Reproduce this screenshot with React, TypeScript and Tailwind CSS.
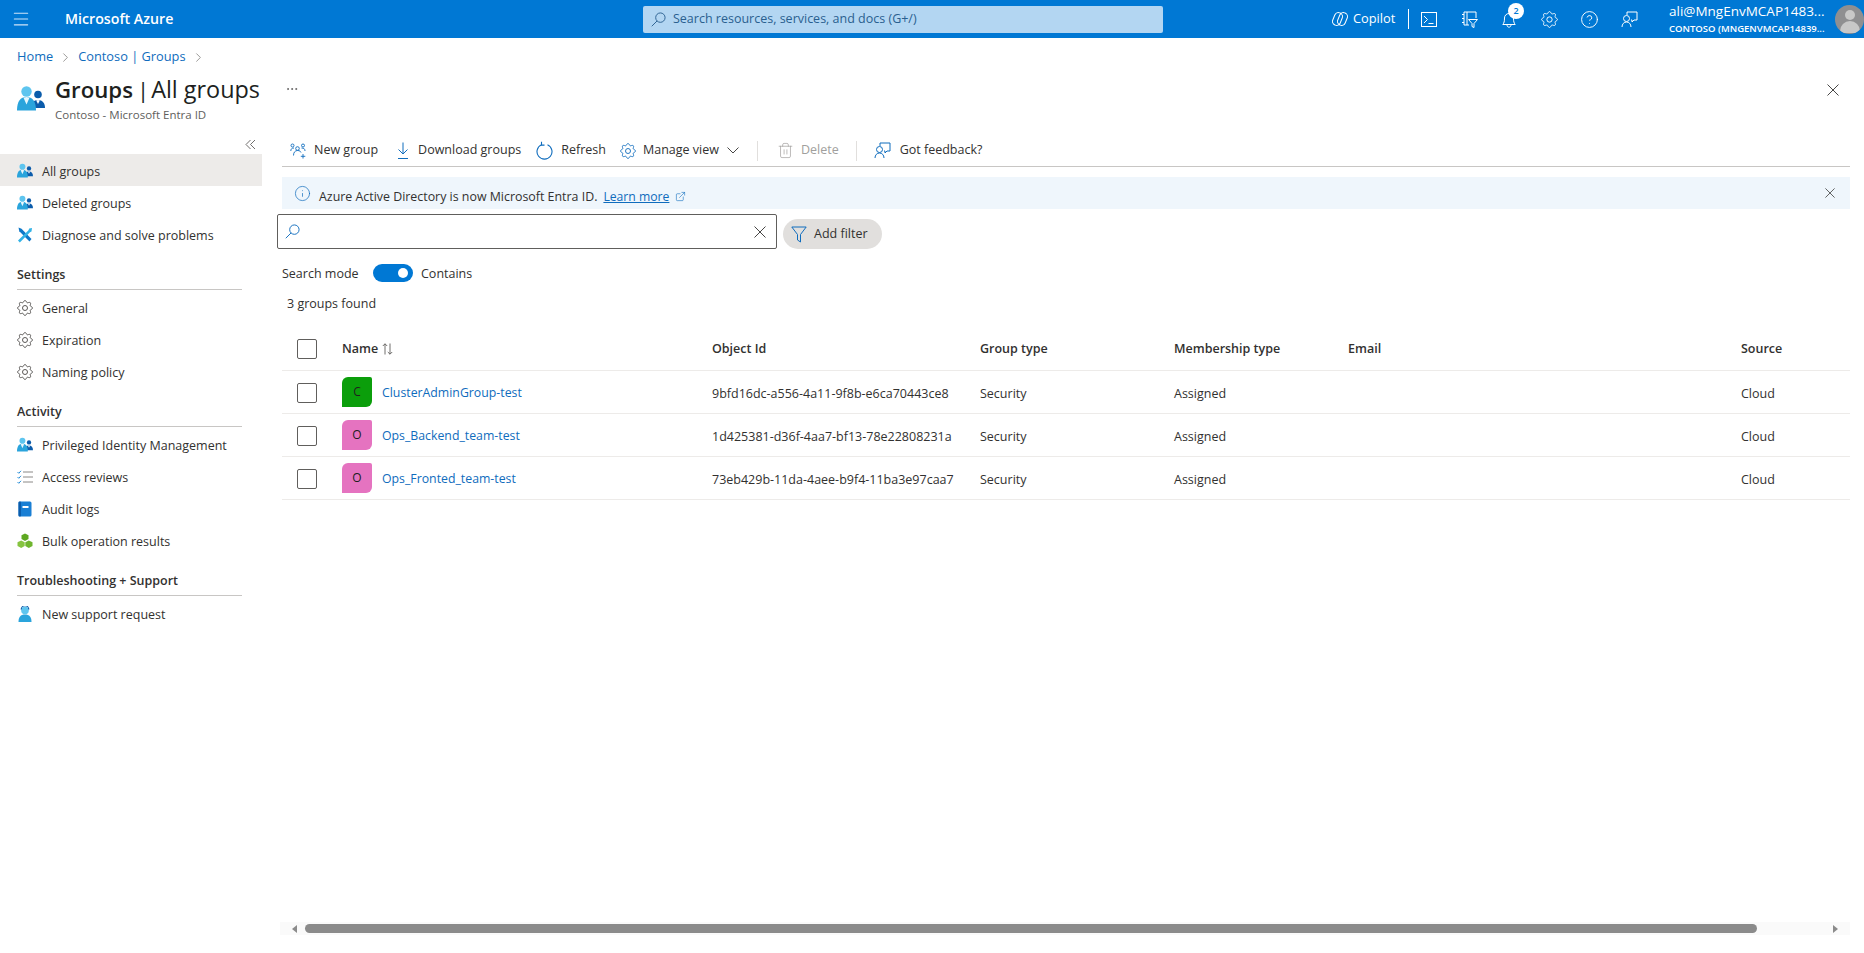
import { ChevronRight, CircleHelp, Ellipsis, ExternalLink, Info, Menu, Trash2 } from "lucide-react"

// scalloped outline of the portal's gear icon
const gearPoints = Array.from({ length: 96 }, (_, i) => {
  const angle = (i / 96) * Math.PI * 2
  const radius = 6.6 + 0.9 * Math.cos(angle * 8)
  return `${(8 + radius * Math.cos(angle)).toFixed(2)},${(8 + radius * Math.sin(angle)).toFixed(2)}`
}).join(" ")

function GearIcon({ color = "#484644", size = 16 }: { color?: string; size?: number }) {
  return (
    <svg width={size} height={size} viewBox="0 0 16 16" fill="none" stroke={color} strokeWidth="0.900" className="shrink-0">
      <polygon points={gearPoints} />
      <circle cx="8" cy="8" r="2.500" />
    </svg>
  )
}

function Cross({ size, color = "#323130" }: { size: number; color?: string }) {
  return (
    <svg width={size} height={size} viewBox="0 0 12 12" fill="none" stroke={color} strokeWidth="0.900" className="shrink-0">
      <path d="M.5.5l11 11M11.500.5l-11 11" />
    </svg>
  )
}

function SearchGlyph({ color, size = 15 }: { color: string; size?: number }) {
  return (
    <svg width={size} height={size} viewBox="0 0 16 16" fill="none" stroke={color} strokeWidth="1" className="shrink-0">
      <circle cx="10" cy="6" r="5" />
      <path d="M6.400 9.600L.8 15.200" />
    </svg>
  )
}

// Blue "people" glyph used for groups in the blade header and side menu
function PeopleIcon({ size = 16 }: { size?: number }) {
  return (
    <svg width={size} height={size} viewBox="0 0 28 28" className="shrink-0">
      <circle cx="21" cy="9.500" r="3.800" fill="#0b5cab" />
      <path d="M14 23c0-5 2.500-8 7-8s7 3 7 8z" fill="#0b5cab" />
      <path d="M21 15l-1.800.4 1.800 3.500 1.800-3.500z" fill="#ffffff" />
      <circle cx="9.500" cy="6.500" r="5.200" fill="#5ec5ef" />
      <path d="M0 25.500C0 16 3.500 12 9.500 12S19 16 19 25.500z" fill="#2aa4dc" />
      <path d="M9.500 12l-3 .7 3 6.800 3-6.800z" fill="#e8f7fd" />
    </svg>
  )
}

function ToolsIcon() {
  return (
    <svg width="16" height="16" viewBox="0 0 16 16" className="shrink-0">
      <path d="M1.500.5l3 1.200 10 10.300-2 2.500L2.300 4.200 1.500.5z" fill="#0f78c8" />
      <path d="M15 1l-2.800.5-.7 1.800L1 13.500l1.800 2L13 5.200l1.500-.7z" fill="#33b3e6" />
    </svg>
  )
}

function ChecklistIcon() {
  return (
    <svg width="16" height="16" viewBox="0 0 16 16" fill="none" className="shrink-0">
      <path d="M.5 3l1.300 1.300L4 1.800M.5 8l1.300 1.300L4 6.800M.5 13l1.300 1.300L4 11.800" stroke="#2a8fd8" />
      <path d="M6 3h10M6 8h10M6 13h10" stroke="#8a8886" />
    </svg>
  )
}

function BookIcon() {
  return (
    <svg width="16" height="16" viewBox="0 0 16 16" className="shrink-0">
      <rect x="1.500" y="0.500" width="13" height="15" rx="1.500" fill="#1a7fd4" />
      <rect x="1.500" y="0.500" width="2.500" height="15" rx="1" fill="#0b5cab" />
      <rect x="5.500" y="5" width="6" height="2" fill="#ffffff" />
    </svg>
  )
}

function CubesIcon() {
  return (
    <svg width="16" height="16" viewBox="0 0 16 16" className="shrink-0">
      <path d="M8 .5l3.500 1.800v3.800L8 8 4.500 6.100V2.300z" fill="#5ea821" />
      <path d="M4.200 7.400l3.500 1.800v3.800L4.200 15 .5 13V9.200z" fill="#86c440" />
      <path d="M11.800 7.400l3.700 1.800V13l-3.700 2-3.500-2V9.200z" fill="#6fb52e" />
    </svg>
  )
}

function SupportIcon() {
  return (
    <svg width="16" height="16" viewBox="0 0 16 16" className="shrink-0">
      <circle cx="8" cy="4.500" r="3.800" fill="#5ec5ef" />
      <path d="M4.200 3.500a3.800 3.800 0 0 1 7.600 0" fill="none" stroke="#0b5cab" strokeWidth="1.200" />
      <path d="M1.500 16c0-5 2-7.500 6.500-7.500S14.500 11 14.500 16z" fill="#2aa4dc" />
    </svg>
  )
}

function NewGroupIcon() {
  return (
    <svg width="16" height="16" viewBox="0 0 16 16" fill="none" stroke="#0f6cbd" strokeWidth="0.900" className="shrink-0">
      <circle cx="2.500" cy="2.500" r="1.500" />
      <circle cx="7.500" cy="5.500" r="1.800" />
      <circle cx="13" cy="2.500" r="1.500" />
      <path d="M.8 8c0-2 1-3 3.200-3M3.500 12.500c0-3 1.500-5 4-5s3 1 3.500 2M15 8c0-2-1-3-3.500-3" />
      <path d="M13 11v4.500M10.800 13.300h4.500" />
    </svg>
  )
}

function DownloadIcon() {
  return (
    <svg width="16" height="18" viewBox="0 0 16 18" fill="none" stroke="#0f6cbd" strokeWidth="1" className="shrink-0">
      <path d="M8 .5V12M3.500 7.500L8 12l4.500-4.500M3 16.500h10" />
    </svg>
  )
}

function RefreshIcon() {
  return (
    <svg width="17" height="19" viewBox="0 0 17 19" fill="none" stroke="#0f6cbd" strokeWidth="1.100" className="shrink-0">
      <path d="M11.500 3.800a7.500 7.500 0 1 1-6 0" />
      <path d="M5.500.8v3.300h3" />
    </svg>
  )
}

function FunnelIcon() {
  return (
    <svg width="16" height="17" viewBox="0 0 16 17" fill="none" stroke="#0f6cbd" strokeWidth="1" className="shrink-0">
      <path d="M.8 1h14.400L9.500 8.500v7.500l-3-2V8.500z" />
    </svg>
  )
}

function SortIcon() {
  return (
    <svg width="11" height="12" viewBox="0 0 11 12" fill="none" stroke="#605e5c" strokeWidth="0.900" className="shrink-0">
      <path d="M3 11.500V.8M.8 3L3 .8 5.200 3M8 .5v10.700M5.800 9L8 11.200 10.200 9" />
    </svg>
  )
}

function FeedbackIcon({ color }: { color: string }) {
  return (
    <svg width="17" height="17" viewBox="0 0 17 17" fill="none" stroke={color} strokeWidth="1" className="shrink-0">
      <path d="M6 4V1h10v8h-3l-2 2V9h-1" />
      <circle cx="5.500" cy="7.500" r="3" />
      <path d="M1 16c0-3 2-5 4.500-5S10 13 10 16" />
    </svg>
  )
}

function CopilotIcon() {
  return (
    <svg width="16" height="16" viewBox="0 0 16 16" fill="none" stroke="#ffffff" strokeWidth="1" className="shrink-0">
      <rect x="1.500" y="1.500" width="8" height="13" rx="3.800" transform="rotate(22 5.500 8)" />
      <rect x="6.500" y="1.500" width="8" height="13" rx="3.800" transform="rotate(22 10.500 8)" />
    </svg>
  )
}

function ShellIcon() {
  return (
    <svg width="16" height="15" viewBox="0 0 16 15" fill="none" stroke="#ffffff" strokeWidth="1" className="shrink-0">
      <rect x="0.500" y="0.500" width="15" height="14" />
      <path d="M3 4l3.500 3.500L3 11M7.500 11.500h5" />
    </svg>
  )
}

function DirectoryFilterIcon() {
  return (
    <svg width="17" height="17" viewBox="0 0 17 17" fill="none" stroke="#ffffff" strokeWidth="1" className="shrink-0">
      <path d="M6 1h9v6M3 1h3v13H3zM1 3.500h2M1 7.500h2M1 11.500h2M6 14h2" />
      <path d="M7.500 8.500h9l-3.500 4v4l-2-1v-3z" />
    </svg>
  )
}

function BellIcon() {
  return (
    <svg width="14" height="16" viewBox="0 0 14 16" fill="none" stroke="#ffffff" strokeWidth="1" className="shrink-0">
      <path d="M.8 12.500C2 11 2.500 9.500 2.500 6a4.500 4.500 0 0 1 9 0c0 3.500.5 5 1.700 6.500z" />
      <path d="M5 12.800c0 1.500.9 2.400 2 2.400s2-.9 2-2.400" />
    </svg>
  )
}

const mainMenu = [
  { label: "All groups", icon: <PeopleIcon />, active: true },
  { label: "Deleted groups", icon: <PeopleIcon /> },
  { label: "Diagnose and solve problems", icon: <ToolsIcon /> },
]

const menuSections = [
  {
    title: "Settings",
    items: [
      { label: "General", icon: <GearIcon /> },
      { label: "Expiration", icon: <GearIcon /> },
      { label: "Naming policy", icon: <GearIcon /> },
    ],
  },
  {
    title: "Activity",
    items: [
      { label: "Privileged Identity Management", icon: <PeopleIcon /> },
      { label: "Access reviews", icon: <ChecklistIcon /> },
      { label: "Audit logs", icon: <BookIcon /> },
      { label: "Bulk operation results", icon: <CubesIcon /> },
    ],
  },
  {
    title: "Troubleshooting + Support",
    items: [{ label: "New support request", icon: <SupportIcon /> }],
  },
]

const groups = [
  { name: "ClusterAdminGroup-test", letter: "C", color: "bg-[#0b9e0b]", id: "9bfd16dc-a556-4a11-9f8b-e6ca70443ce8" },
  { name: "Ops_Backend_team-test", letter: "O", color: "bg-[#e573c0]", id: "1d425381-d36f-4aa7-bf13-78e22808231a" },
  { name: "Ops_Fronted_team-test", letter: "O", color: "bg-[#e573c0]", id: "73eb429b-11da-4aee-b9f4-11ba3e97caa7" },
]

function MenuRow({ label, icon, active }: { label: string; icon: React.ReactNode; active?: boolean }) {
  return (
    <div className={`flex h-8 items-center gap-[9px] pl-[17px] pt-[2px] ${active ? "bg-[#edebe9]" : ""}`}>
      {icon}
      <span className="mt-[2px]">{label}</span>
    </div>
  )
}

function Checkbox() {
  return <div className="h-5 w-5 rounded-[2px] border border-[#605e5c] bg-white" />
}

export default function App() {
  return (
    <div className="flex h-screen flex-col overflow-hidden bg-white font-['Open_Sans',sans-serif] text-[12.5px] text-[#323130]">
      {/* top bar */}
      <header className="relative flex h-[38px] shrink-0 items-center bg-[#0078d4] text-white">
        <Menu size={20} strokeWidth={1.300} color="#cfe4f7" className="ml-[11px]" />
        <span className="ml-[34px] w-[112px] whitespace-nowrap text-[14.200px] font-semibold">Microsoft Azure</span>
        <div className="ml-[466px] flex h-[27px] w-[520px] items-center gap-[7px] rounded-[2px] bg-[#b3d6f2] pl-[8px] text-[#2a5f8f]">
          <SearchGlyph color="#2a5f8f" />
          <span>Search resources, services, and docs (G+/)</span>
        </div>
        <div className="ml-[169px] flex items-center">
          <CopilotIcon />
          <span className="ml-[5px] w-[55px] text-[12.800px] font-medium">Copilot</span>
          <div className="h-5 w-px bg-white" />
          <div className="flex h-[38px] w-10 items-center justify-center">
            <ShellIcon />
          </div>
          <div className="flex h-[38px] w-10 items-center justify-center">
            <DirectoryFilterIcon />
          </div>
          <div className="flex h-[38px] w-10 items-center justify-center">
            <div className="relative mt-[2px]">
              <BellIcon />
              <span className="absolute -top-[9px] left-[6px] flex h-4 w-4 items-center justify-center rounded-full bg-white text-[9px] font-semibold text-[#0078d4]">
                2
              </span>
            </div>
          </div>
          <div className="flex h-[38px] w-10 items-center justify-center">
            <GearIcon color="#ffffff" size={17} />
          </div>
          <div className="flex h-[38px] w-10 items-center justify-center">
            <CircleHelp size={19} strokeWidth={1.200} />
          </div>
          <div className="flex h-[38px] w-10 items-center justify-center">
            <FeedbackIcon color="#ffffff" />
          </div>
        </div>
        <div className="ml-[20px] flex w-[160px] flex-col leading-none">
          <span className="text-[13.500px]">ali@MngEnvMCAP1483...</span>
          <span className="mt-[5px] text-[9.500px] font-semibold">CONTOSO (MNGENVMCAP14839...</span>
        </div>
        <div className="ml-[6px] flex h-[29px] w-[29px] flex-col items-center overflow-hidden rounded-full bg-[#8f8f91]">
          <div className="mt-[5px] h-[10px] w-[10px] rounded-full bg-[#c8c8c8]" />
          <div className="mt-[1px] h-[12px] w-[20px] rounded-t-full bg-[#c8c8c8]" />
        </div>
      </header>

      {/* breadcrumb */}
      <nav className="flex h-[36px] shrink-0 items-center gap-[5px] pl-[17px] pt-[2px] text-[12.800px] text-[#0f6cbd]">
        <span>Home</span>
        <ChevronRight size={15} strokeWidth={1} color="#605e5c" />
        <span>Contoso | Groups</span>
        <ChevronRight size={15} strokeWidth={1} color="#605e5c" />
      </nav>

      {/* blade title */}
      <div className="flex h-[60px] shrink-0 items-start pl-[17px] pr-[25px]">
        <div className="mt-[11px]">
          <PeopleIcon size={28} />
        </div>
        <div className="ml-[10px] flex w-[230px] flex-col">
          <h1 className="-mt-[1px] whitespace-nowrap text-[22.200px] leading-[32px] text-[#201f1e]">
            <span className="font-semibold">Groups</span>
            <span className="ml-[4px] mr-[2px]">|</span>
            <span className="text-[23.400px]">All groups</span>
          </h1>
          <span className="text-[11.500px] leading-[17px] text-[#605e5c]">Contoso - Microsoft Entra ID</span>
        </div>
        <Ellipsis size={14} strokeWidth={1} className="mt-[8px]" />
        <div className="ml-auto mt-[10px]">
          <Cross size={12} />
        </div>
      </div>

      <div className="flex min-h-0 flex-1">
        {/* side menu */}
        <aside className="w-[262px] shrink-0">
          <div className="flex h-[20px] items-center justify-end pr-[6px]">
            <svg width="11" height="11" viewBox="0 0 11 11" fill="none" stroke="#605e5c" strokeWidth="0.900">
              <path d="M5.500 1L1 5.500 5.500 10M10 1L5.500 5.500 10 10" />
            </svg>
          </div>
          {mainMenu.map((item) => (
            <MenuRow key={item.label} {...item} />
          ))}
          {menuSections.map((section) => (
            <div key={section.title}>
              <div className="ml-[17px] mr-5 mt-[15px] flex h-[25px] items-center border-b border-[#c8c6c4] pb-[4px] font-semibold">
                {section.title}
              </div>
              <div className="mt-[1px]">
                {section.items.map((item) => (
                  <MenuRow key={item.label} {...item} />
                ))}
              </div>
            </div>
          ))}
        </aside>

        {/* content */}
        <main className="flex min-w-0 flex-1 flex-col pl-[15px] pr-[14px]">
          <div className="ml-[5px] flex h-[33px] shrink-0 items-center border-b border-[#c8c6c4] pl-[8px] pt-[1px]">
            <NewGroupIcon />
            <span className="ml-2">New group</span>
            <div className="ml-[17px]">
              <DownloadIcon />
            </div>
            <span className="ml-[7px]">Download groups</span>
            <div className="ml-[15px]">
              <RefreshIcon />
            </div>
            <span className="ml-2">Refresh</span>
            <div className="ml-[14px]">
              <GearIcon color="#0f6cbd" />
            </div>
            <span className="ml-[7px]">Manage view</span>
            <svg width="12" height="7" viewBox="0 0 12 7" fill="none" stroke="#323130" strokeWidth="0.900" className="ml-2">
              <path d="M.5.5L6 6l5.500-5.500" />
            </svg>
            <div className="ml-[18px] h-[20px] w-px bg-[#e1dfdd]" />
            <Trash2 size={17} strokeWidth={1} color="#a19f9d" className="ml-[19px]" />
            <span className="ml-[7px] text-[#a19f9d]">Delete</span>
            <div className="ml-[17px] h-[20px] w-px bg-[#e1dfdd]" />
            <div className="ml-[17px]">
              <FeedbackIcon color="#0f6cbd" />
            </div>
            <span className="ml-[9px]">Got feedback?</span>
          </div>

          <div className="ml-[5px] mt-[10px] flex h-[32px] shrink-0 items-center bg-[#eff6fc] pl-3 pr-[15px]">
            <Info size={17} strokeWidth={1} color="#0f6cbd" />
            <span className="ml-[8px] mt-[8px] text-[12.400px]">Azure Active Directory is now Microsoft Entra ID.</span>
            <span className="ml-[6px] mt-[8px] text-[12.200px] text-[#0f6cbd] underline">Learn more</span>
            <ExternalLink size={11} strokeWidth={1.300} color="#0f6cbd" className="ml-[6px] mt-[6px]" />
            <div className="ml-auto">
              <Cross size={10} />
            </div>
          </div>

          <div className="mt-[5px] flex shrink-0 items-end gap-[6px]">
            <div className="flex h-[35px] w-[500px] items-center rounded-[2px] border border-[#605e5c] pl-[7px] pr-[10px]">
              <SearchGlyph color="#0f6cbd" />
              <div className="ml-auto">
                <Cross size={12} />
              </div>
            </div>
            <div className="flex h-[30px] w-[99px] items-center rounded-full bg-[#e1dfdd] pl-2">
              <FunnelIcon />
              <span className="ml-[7px]">Add filter</span>
            </div>
          </div>

          <div className="ml-[5px] mt-[15px] flex h-[18px] shrink-0 items-center">
            <span className="mt-[2px] w-[91px]">Search mode</span>
            <div className="flex h-[18px] w-[40px] items-center justify-end rounded-full bg-[#0078d4] pr-[5px]">
              <div className="h-[10px] w-[10px] rounded-full bg-white" />
            </div>
            <span className="ml-2 mt-[2px]">Contains</span>
          </div>

          <div className="ml-[10px] mt-[13px] h-[18px] shrink-0 leading-[18px]">3 groups found</div>

          {/* groups table */}
          <div className="ml-[5px] mt-[14px] flex-1">
            <div className="grid h-[44px] grid-cols-[60px_370px_268px_194px_174px_393px_1fr] items-center border-b border-[#edebe9] pt-[1px] font-semibold">
              <div className="pl-[15px]">
                <Checkbox />
              </div>
              <div className="flex items-center gap-1">
                Name
                <SortIcon />
              </div>
              <div>Object Id</div>
              <div>Group type</div>
              <div>Membership type</div>
              <div>Email</div>
              <div>Source</div>
            </div>
            {groups.map((group) => (
              <div
                key={group.id}
                className="grid h-[43px] grid-cols-[60px_370px_268px_194px_174px_393px_1fr] items-center border-b border-[#edebe9]"
              >
                <div className="pl-[15px] pt-[2px]">
                  <Checkbox />
                </div>
                <div className="flex items-center">
                  <div
                    className={`flex h-[30px] w-[30px] items-center justify-center rounded-tl-[6px] rounded-tr-[2px] rounded-br-[6px] text-[12px] text-[#201f1e] ${group.color}`}
                  >
                    {group.letter}
                  </div>
                  <span className="ml-[10px] mt-[2px] text-[12.300px] text-[#0f6cbd]">{group.name}</span>
                </div>
                <div className="pt-[4px]">{group.id}</div>
                <div className="pt-[4px]">Security</div>
                <div className="pt-[4px]">Assigned</div>
                <div />
                <div className="pt-[4px]">Cloud</div>
              </div>
            ))}
          </div>

          {/* horizontal scrollbar */}
          <div className="mb-[18px] ml-[3px] flex h-[13px] shrink-0 items-center bg-[#fafafa] pl-[12px] pr-[12px]">
            <div className="h-0 w-0 border-y-[4px] border-r-[5px] border-y-transparent border-r-[#8b8b8b]" />
            <div className="ml-[8px] h-[9px] w-[1452px] rounded-full bg-[#8b8b8b]" />
            <div className="ml-auto h-0 w-0 border-y-[4px] border-l-[5px] border-y-transparent border-l-[#8b8b8b]" />
          </div>
        </main>
      </div>
    </div>
  )
}
